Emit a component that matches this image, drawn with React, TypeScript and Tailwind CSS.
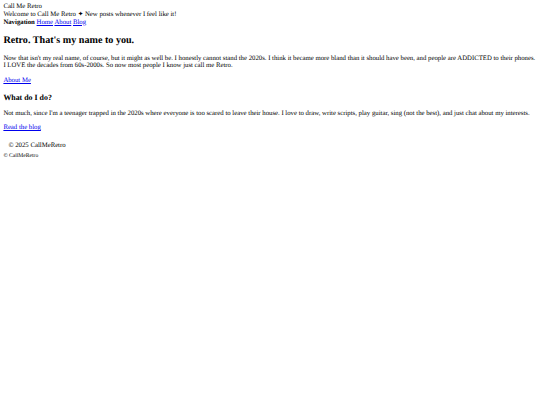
import React from 'react';

const link = 'text-[#0000ee] underline';

export default function App() {
  return (
    <div className="min-h-screen bg-white p-[3.375px] font-['Liberation_Serif',serif] text-[6.75px] leading-[7.6px] text-black [text-rendering:geometricPrecision]">
      {/* Header */}
      <div>Call Me Retro</div>
      <div>Welcome to Call Me Retro ✦ New posts whenever I feel like it!</div>
      <div>
        <span className="font-bold">Navigation</span>{' '}
        <a href="#" className={link}>Home</a>{' '}
        <a href="#" className={link}>About</a>{' '}
        <a href="#" className={link}>Blog</a>
      </div>

      {/* Intro */}
      <h2 className="my-[8.4px] text-[10.125px] font-bold leading-[11.6px]">
        Retro. That's my name to you.
      </h2>
      <p className="mt-[6.75px] mb-[7.6px]">
        Now that isn't my real name, of course, but it might as well be. I honestly cannot stand the 2020s. I think it became
        more bland than it should have been, and people are ADDICTED to their phones. I LOVE the decades from 60s-2000s. So
        now most people I know just call me Retro.
      </p>
      <p className="my-[6.75px]">
        <a href="#" className={link}>About Me</a>
      </p>

      {/* What */}
      <h3 className="my-[7.9px] text-[7.9px] font-bold leading-[9.1px]">What do I do?</h3>
      <p className="my-[6.75px]">
        Not much, since I'm a teenager trapped in the 2020s where everyone is too scared to leave their house. I love to draw,
        write scripts, play guitar, sing (not the best), and just chat about my interests.
      </p>
      <p className="my-[6.75px]">
        <a href="#" className={link}>Read the blog</a>
      </p>

      {/* Footer */}
      <div className="mt-[6.75px] px-[5px] py-[3.4px]">© 2025 CallMeRetro</div>
      <div className="text-[5.6px] leading-[6.5px]">© CallMeRetro</div>
    </div>
  );
}
